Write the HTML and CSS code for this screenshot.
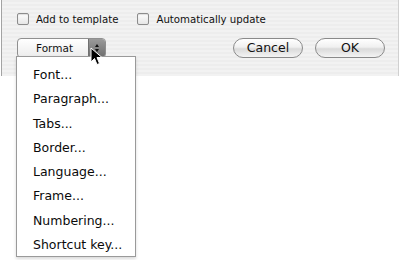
FILE: index.html
```html
<!doctype html>
<html lang="en">
  <head>
    <meta charset="UTF-8" />
    <title>Style options</title>
    <link rel="stylesheet" href="styles.css">
  </head>
  <body>
    <div class="dialog">
      <div class="checks">
        <label class="check"><span class="box"></span>Add to template</label>
        <label class="check"><span class="box"></span>Automatically update</label>
      </div>
      <div class="controls">
        <div class="popup">
          <span class="popup-label">Format</span>
          <span class="popup-arrows"><span class="up"></span><span class="down"></span></span>
        </div>
        <div class="buttons">
          <button class="pill">Cancel</button>
          <button class="pill">OK</button>
        </div>
      </div>
    </div>

    <ul class="menu">
      <li>Font...</li>
      <li>Paragraph...</li>
      <li>Tabs...</li>
      <li>Border...</li>
      <li>Language...</li>
      <li>Frame...</li>
      <li>Numbering...</li>
      <li>Shortcut key...</li>
    </ul>

    <svg class="cursor" width="14" height="20" viewBox="0 0 14 20">
      <path d="M1 1 L1 15 L4.5 11.5 L7 17.5 L9.5 16.5 L7 10.5 L12 10.5 Z" fill="#000" stroke="#fff" stroke-width="1" stroke-linejoin="round" />
    </svg>
  </body>
</html>
```

FILE: styles.css
```css
* {
  box-sizing: border-box;
}

body {
  margin: 0;
  background: #fff;
  font-family: "DejaVu Sans", "Liberation Sans", sans-serif;
  color: #111;
  position: relative;
  width: 401px;
  height: 260px;
  overflow: hidden;
}

.dialog {
  margin-left: 1px;
  width: 398px;
  height: 76px;
  border-left: 1px solid #a3a3a3;
  border-right: 1px solid #d0d0d0;
  background: repeating-linear-gradient(180deg, #ededed 0 2px, #f2f2f2 2px 4px);
  padding: 13px 0 0 15px;
}

.checks {
  display: flex;
  gap: 19px;
  height: 12px;
  align-items: center;
}

.check {
  display: flex;
  align-items: center;
  gap: 7px;
  font-size: 10.2px;
}

.box {
  width: 12px;
  height: 12px;
  border: 1px solid #8c8c8c;
  border-radius: 2px;
  background: linear-gradient(180deg, #fdfdfd, #e6e6e6);
  box-shadow: inset 0 1px 1px rgba(0, 0, 0, 0.12);
}

.controls {
  display: flex;
  justify-content: space-between;
  align-items: flex-start;
  margin-top: 13px;
  padding-right: 13px;
}

.popup {
  display: flex;
  width: 89px;
  height: 20px;
  border: 1px solid #8f8f8f;
  border-radius: 4px;
  background: linear-gradient(180deg, #ffffff, #ececec);
  overflow: hidden;
}

.popup-label {
  flex: 1;
  font-size: 10.5px;
  padding: 3px 0 0 18px;
}

.popup-arrows {
  width: 17px;
  background: linear-gradient(180deg, #9a9a9a, #6e6e6e);
  border-left: 1px solid #707070;
  display: flex;
  flex-direction: column;
  align-items: center;
  padding-top: 5px;
  gap: 2px;
}

.up {
  width: 0;
  height: 0;
  border-left: 2px solid transparent;
  border-right: 2px solid transparent;
  border-bottom: 3px solid #111;
}

.down {
  width: 0;
  height: 0;
  border-left: 2px solid transparent;
  border-right: 2px solid transparent;
  border-top: 3px solid #111;
}

.buttons {
  display: flex;
  gap: 12px;
}

.pill {
  width: 70px;
  height: 20px;
  border: 1px solid #8a8a8a;
  border-radius: 10px;
  background: linear-gradient(180deg, #ffffff 0%, #f0f0f0 45%, #dadada 55%, #f4f4f4 100%);
  font-family: inherit;
  font-size: 12.5px;
  color: #111;
  padding: 0;
  line-height: 18px;
}

.menu {
  position: absolute;
  left: 16px;
  top: 56px;
  width: 120px;
  height: 201px;
  margin: 0;
  padding: 6px 0 0 16px;
  list-style: none;
  background: #fff;
  border: 1px solid #9a9a9a;
  box-shadow: 0 2px 3px rgba(0, 0, 0, 0.15);
}

.menu li {
  height: 24.3px;
  line-height: 24px;
  font-size: 12.5px;
  color: #0a0a0a;
}

.cursor {
  position: absolute;
  left: 90px;
  top: 47px;
}
```
